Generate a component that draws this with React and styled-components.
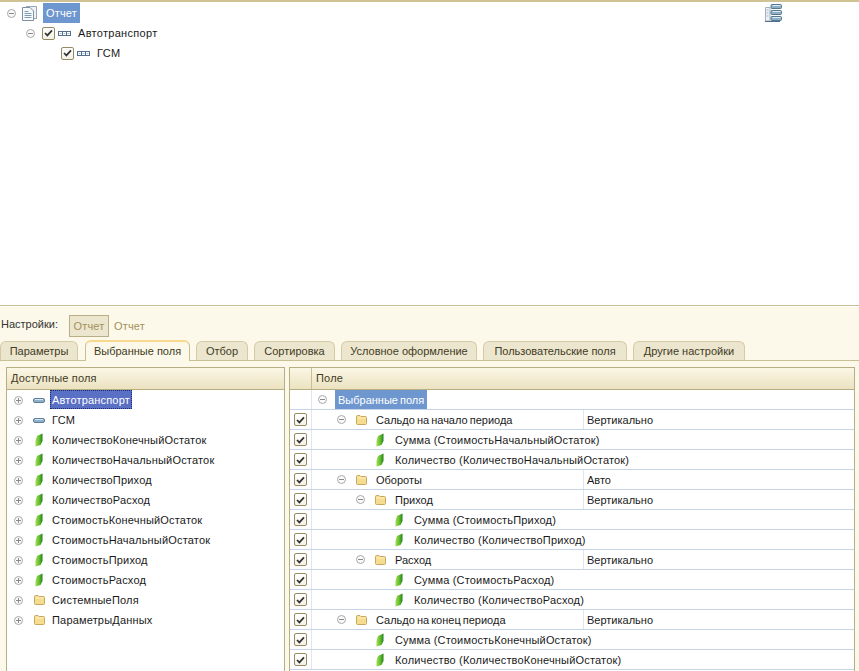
import React from "react";
import styled, { createGlobalStyle } from "styled-components";

const Global = createGlobalStyle`
  html, body { margin: 0; padding: 0; background: #fff; }
  body { font-family: "Liberation Sans", Arial, sans-serif; font-size: 11px; color: #1a1a1a; letter-spacing: .18px; }
  #root { width: 859px; height: 671px; overflow: hidden; }
`;

const Page = styled.div`
  width: 859px; height: 671px; display: flex; flex-direction: column; overflow: hidden;
`;
const TopArea = styled.div`
  height: 305px; flex: none; background: #fff; border-top: 2px solid #cfc393; padding-top: 1px; box-sizing: border-box;
  display: flex; flex-direction: column;
`;
const TopRow = styled.div`
  height: 20px; display: flex; align-items: center; padding-left: ${p => p.$pad}px; flex: none;
`;
const TopLabel = styled.span`
  margin-left: ${p => p.$ml || 0}px; padding: 0 ${p => (p.$sel ? 3 : 0)}px; height: 20px; line-height: 20px;
  background: ${p => (p.$sel ? "#6f97cf" : "transparent")}; color: ${p => (p.$sel ? "#fff" : "#1a1a1a")};
  letter-spacing: ${p => (p.$sel ? ".18px" : ".3px")};
`;
const RightTool = styled.span`
  margin-left: auto; margin-right: 77px; display: flex;
`;
const Settings = styled.div`
  flex: 1; min-height: 0; background: #fcf9ea; border-top: 1px solid #c9bf95; box-shadow: inset 0 1px 0 #fff; display: flex; flex-direction: column;
`;
const SettingsBar = styled.div`
  height: 31px; flex: none; display: flex; align-items: flex-end; padding: 0 0 0 1px; box-sizing: border-box;
`;
const BarLabel = styled.span`
  color: #333; line-height: 22px; margin-right: 11px; position: relative; top: -2px; letter-spacing: 0;
`;
const VariantOn = styled.span`
  box-sizing: border-box; width: 40px; height: 22px; text-align: center; background: #ece6cf; border: 1px solid #b9ae85; color: #a3905a; line-height: 21px;
`;
const VariantOff = styled.span`
  margin-left: 5px; height: 22px; line-height: 22px; color: #a3905a;
`;
const Tabs = styled.div`
  flex: none; height: 23px; display: flex; align-items: flex-end; gap: 6px; border-bottom: 1px solid #c9bf95; box-sizing: border-box; margin-top: 1px;
`;
const Tab = styled.div`
  box-sizing: border-box; width: ${p => p.$w}px; text-align: center; height: ${p => (p.$on ? 21 : 19)}px; line-height: 19px;
  border: 1px solid #d4cba6; border-bottom: none; border-radius: 6px 6px 0 0; color: #3f3b24; letter-spacing: 0; white-space: nowrap;
  background: ${p => (p.$on ? "#fcf9ea" : "#ece6cf")};
  ${p => p.$on && "border-top: 2px solid #f6d98d; border-left-color:#c9bf95; border-right-color:#c9bf95; margin-bottom: -1px; margin-left: 1px;"}
`;
const Panels = styled.div`
  flex: 1; min-height: 0; display: flex; gap: 4px; padding: 6px 3px 0 6px;
`;
const Panel = styled.div`
  box-sizing: border-box; width: ${p => p.$w}px; flex: none; height: 320px; background: #fff; border: 1px solid #b8ae83;
`;
const Header = styled.div`
  box-sizing: border-box; height: 22px; border-bottom: 1px solid #b8ae83; background: linear-gradient(#fbf7e6, #ebe2c0); display: flex; align-items: center; color: #3f3b24; line-height: 21px;
`;
const HeadCheck = styled.div`
  width: 21px; height: 100%; border-right: 1px solid #c9bf95; flex: none;
`;
const HeadText = styled.div`
  padding-left: ${p => p.$pad}px;
`;
const TreeRow = styled.div`
  height: 20px; display: flex; align-items: center; padding-left: 3px; color: #1a1a1a;
`;
const Slot = styled.span`
  width: ${p => p.$w}px; flex: none; display: flex; align-items: center; justify-content: center;
`;
const Focused = styled.span`
  align-self: flex-start; height: 19px; line-height: 18px; padding: 0 1px; margin-left: -2px; box-sizing: border-box; background: #5a70c4; color: #fff; border: 1px dotted #1a2a70;
`;
const GridRow = styled.div`
  box-sizing: border-box; height: 20px; display: flex; border-bottom: 1px solid #c6d4e6;
`;
const CheckCell = styled.div`
  width: 21px; flex: none; display: flex; align-items: center; justify-content: center; border-right: 1px solid #dfe6ef;
`;
const FieldCell = styled.div`
  width: 272px; flex: none; display: flex; align-items: center; padding-left: ${p => p.$level * 19 + 1}px; box-sizing: border-box; white-space: nowrap;
  border-right: 1px solid ${p => (p.$line ? "#dfe6ef" : "transparent")};
`;
const FieldText = styled.span`
  ${p => p.$group && "letter-spacing: 0; word-spacing: -1px;"}
`;
const UseCell = styled.div`
  padding-left: 3px; line-height: 20px; letter-spacing: 0;
`;
const GroupLabel = styled.span`
  height: 19px; line-height: 20px; padding: 0 3px; margin-left: 3px; background: #6f97cf; color: #fff; letter-spacing: 0; word-spacing: -1px;
`;
const Box = styled.span`
  box-sizing: border-box; display: inline-flex; width: 13px; height: 13px; border: 1px solid #958a66; border-radius: 2px; background: linear-gradient(#fff, #f4f1e6); align-items: center; justify-content: center; flex: none;
`;

const Check = () => (
  <Box>
    <svg width="9" height="8" viewBox="0 0 9 8"><path d="M1 4l2.4 2.4L8 1.4" fill="none" stroke="#333" strokeWidth="1.7" /></svg>
  </Box>
);
const Expander = ({ plus }) => (
  <svg width="9" height="9" viewBox="0 0 9 9">
    <circle cx="4.5" cy="4.5" r="4" fill="#fafafa" stroke="#a9a9a9" />
    <path d={plus ? "M2 4.5h5M4.5 2v5" : "M2 4.5h5"} stroke="#8a8a8a" />
  </svg>
);
const Leaf = () => (
  <svg width="8" height="14" viewBox="0 0 8 14">
    <defs><linearGradient id="lf" x1="0" x2="1" y1="0" y2="0"><stop offset="0" stopColor="#a4de52" /><stop offset=".55" stopColor="#64bd2e" /><stop offset="1" stopColor="#1f7f1c" /></linearGradient></defs>
    <path d="M2 3 7.5 .5 7.5 8 5.5 12 .5 13.5 .5 8Z" fill="url(#lf)" />
  </svg>
);
const Folder = () => (
  <svg width="11" height="10" viewBox="0 0 11 10">
    <path d="M.5 1.5Q.5 .5 1.5 .5H4L5 1.5H9.5Q10.5 1.5 10.5 2.5V8.5Q10.5 9.5 9.5 9.5H1.5Q.5 9.5 .5 8.5Z" fill="#f6dc8e" stroke="#c8a860" />
    <path d="M1.5 3H9.5" stroke="#fff3c4" />
  </svg>
);
const Dash = () => (
  <svg width="12" height="5" viewBox="0 0 12 5"><rect x=".5" y=".5" width="11" height="4" rx="1.5" fill="#8fb0c8" stroke="#5d7f99" /><path d="M2 1.5h8" stroke="#d5e4ef" /></svg>
);
const Attr = () => (
  <svg width="13" height="5" viewBox="0 0 13 5">
    <rect x=".5" y=".5" width="12" height="4" fill="#fff" stroke="#54708c" />
    <path d="M4.5 .5v4M8.5 .5v4" stroke="#54708c" />
    <path d="M1.5 2.5h2M5.5 2.5h2M9.5 2.5h2" stroke="#a9bccd" />
  </svg>
);
const DocIcon = () => (
  <svg width="15" height="15" viewBox="0 0 15 15">
    <rect x="4.5" y=".5" width="10" height="12" fill="#eef2f6" stroke="#9aa9b8" />
    <path d="M.5 1.5H8L11.5 5V14.5H.5Z" fill="#f8fafc" stroke="#7f91a3" />
    <path d="M2.5 5.5H6.5M2.5 7.5H9.5M2.5 9.5H9.5M2.5 11.5H9.5" stroke="#7f9ab5" />
  </svg>
);
const TreeTool = () => (
  <svg width="17" height="18" viewBox="0 0 17 18">
    <path d="M.5 3.5H5V17H.5Z" fill="#eef2f6" stroke="#a5b2bf" />
    <path d="M1.5 6h2M1.5 9h2M1.5 12h2" stroke="#a5b2bf" />
    <path d="M0 17.5H15" stroke="#4f6f8c" />
    <rect x="6" y=".5" width="10.5" height="4" rx="1" fill="#8db0c6" stroke="#55788f" />
    <rect x="6" y="6.5" width="10.5" height="4" rx="1" fill="#8db0c6" stroke="#55788f" />
    <rect x="6" y="12.5" width="10.5" height="4" rx="1" fill="#8db0c6" stroke="#55788f" />
    <path d="M7.5 1.5h8M7.5 7.5h8M7.5 13.5h8" stroke="#dce9f2" />
  </svg>
);

const tabs = [["Параметры", 78], ["Выбранные поля", 105], ["Отбор", 52], ["Сортировка", 81], ["Условное оформление", 136], ["Пользовательские поля", 144], ["Другие настройки", 112]];
const available = [
  ["dash", "Автотранспорт", true],
  ["dash", "ГСМ"],
  ["leaf", "КоличествоКонечныйОстаток"],
  ["leaf", "КоличествоНачальныйОстаток"],
  ["leaf", "КоличествоПриход"],
  ["leaf", "КоличествоРасход"],
  ["leaf", "СтоимостьКонечныйОстаток"],
  ["leaf", "СтоимостьНачальныйОстаток"],
  ["leaf", "СтоимостьПриход"],
  ["leaf", "СтоимостьРасход"],
  ["folder", "СистемныеПоля"],
  ["folder", "ПараметрыДанных"],
];
const selected = [
  { level: 1, folder: true, text: "Сальдо на начало периода", use: "Вертикально" },
  { level: 2, text: "Сумма (СтоимостьНачальныйОстаток)" },
  { level: 2, text: "Количество (КоличествоНачальныйОстаток)" },
  { level: 1, folder: true, text: "Обороты", use: "Авто" },
  { level: 2, folder: true, text: "Приход", use: "Вертикально" },
  { level: 3, text: "Сумма (СтоимостьПриход)" },
  { level: 3, text: "Количество (КоличествоПриход)" },
  { level: 2, folder: true, text: "Расход", use: "Вертикально" },
  { level: 3, text: "Сумма (СтоимостьРасход)" },
  { level: 3, text: "Количество (КоличествоРасход)" },
  { level: 1, folder: true, text: "Сальдо на конец периода", use: "Вертикально" },
  { level: 2, text: "Сумма (СтоимостьКонечныйОстаток)" },
  { level: 2, text: "Количество (КоличествоКонечныйОстаток)" },
];

export default function App() {
  return (
    <Page>
      <Global />
      <TopArea>
        <TopRow $pad={7}>
          <Slot $w={9}><Expander /></Slot>
          <Slot $w={27}><DocIcon /></Slot>
          <TopLabel $sel>Отчет</TopLabel>
          <RightTool><TreeTool /></RightTool>
        </TopRow>
        <TopRow $pad={26}>
          <Slot $w={9}><Expander /></Slot>
          <Slot $w={7} />
          <Check />
          <Slot $w={3} />
          <Attr />
          <TopLabel $ml={7}>Автотранспорт</TopLabel>
        </TopRow>
        <TopRow $pad={61}>
          <Check />
          <Slot $w={3} />
          <Attr />
          <TopLabel $ml={7}>ГСМ</TopLabel>
        </TopRow>
      </TopArea>
      <Settings>
        <SettingsBar>
          <BarLabel>Настройки:</BarLabel>
          <VariantOn>Отчет</VariantOn>
          <VariantOff>Отчет</VariantOff>
        </SettingsBar>
        <Tabs>
          {tabs.map(([t, w], i) => <Tab key={t} $w={w} $on={i === 1}>{t}</Tab>)}
        </Tabs>
        <Panels>
          <Panel $w={279}>
            <Header><HeadText $pad={4}>Доступные поля</HeadText></Header>
            {available.map(([kind, text, focus]) => (
              <TreeRow key={text}>
                <Slot $w={16}><Expander plus /></Slot>
                <Slot $w={26}>{kind === "dash" ? <Dash /> : kind === "leaf" ? <Leaf /> : <Folder />}</Slot>
                {focus ? <Focused>{text}</Focused> : <span>{text}</span>}
              </TreeRow>
            ))}
          </Panel>
          <Panel $w={566}>
            <Header><HeadCheck /><HeadText $pad={4}>Поле</HeadText></Header>
            <GridRow>
              <CheckCell />
              <FieldCell $level={0}>
                <Slot $w={19}><Expander /></Slot>
                <GroupLabel>Выбранные поля</GroupLabel>
              </FieldCell>
            </GridRow>
            {selected.map(r => (
              <GridRow key={r.text}>
                <CheckCell><Check /></CheckCell>
                <FieldCell $level={r.level} $line={!!r.use}>
                  <Slot $w={19}>{r.folder && <Expander />}</Slot>
                  <Slot $w={20}>{r.folder ? <Folder /> : <Leaf />}</Slot>
                  <Slot $w={5} />
                  <FieldText $group={r.folder}>{r.text}</FieldText>
                </FieldCell>
                <UseCell>{r.use}</UseCell>
              </GridRow>
            ))}
          </Panel>
        </Panels>
      </Settings>
    </Page>
  );
}
